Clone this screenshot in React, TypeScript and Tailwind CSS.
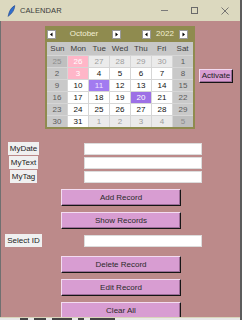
import React from "react";

type Kind = "wd" | "we" | "om" | "owe" | "pink" | "sel" | "today";

const cellCls: Record<Kind, string> = {
  wd: "bg-white text-[#111]",
  we: "bg-[#c9c9c9] text-[#5a5a5a]",
  om: "bg-[#ebebeb] text-[#9c9c9c]",
  owe: "bg-[#bfbfbf] text-[#8c8c8c]",
  pink: "bg-[#ffb6c8] text-white",
  sel: "bg-[#9d70e6] text-white",
  today: "bg-[#a27bf0] text-[#efe6ff]",
};

const rows: [string, Kind][][] = [
  [["25", "owe"], ["26", "pink"], ["27", "om"], ["28", "om"], ["29", "om"], ["30", "om"], ["1", "we"]],
  [["2", "we"], ["3", "pink"], ["4", "wd"], ["5", "wd"], ["6", "wd"], ["7", "wd"], ["8", "we"]],
  [["9", "we"], ["10", "wd"], ["11", "today"], ["12", "wd"], ["13", "wd"], ["14", "wd"], ["15", "we"]],
  [["16", "we"], ["17", "wd"], ["18", "wd"], ["19", "wd"], ["20", "sel"], ["21", "wd"], ["22", "we"]],
  [["23", "we"], ["24", "wd"], ["25", "wd"], ["26", "wd"], ["27", "wd"], ["28", "wd"], ["29", "we"]],
  [["30", "we"], ["31", "wd"], ["1", "om"], ["2", "om"], ["3", "om"], ["4", "om"], ["5", "owe"]],
];

const days = ["Sun", "Mon", "Tue", "Wed", "Thu", "Fri", "Sat"];

function ArrowBtn({ dir }: { dir: "l" | "r" }) {
  return (
    <div className="w-[9px] h-[9px] bg-white border border-[#9a9a9a] flex items-center justify-center">
      <svg width="5" height="5" viewBox="0 0 5 5">
        {dir === "l" ? (
          <polygon points="3.5,0.5 3.5,4.5 1,2.5" fill="#000" />
        ) : (
          <polygon points="1.5,0.5 1.5,4.5 4,2.5" fill="#000" />
        )}
      </svg>
    </div>
  );
}

function Calendar() {
  return (
    <div className="w-[150px] flex flex-col bg-[#8f8b4f] px-[2px] pb-[2px]">
      <div className="h-[16px] flex items-center text-[#f3efd2] text-[8px]">
        <ArrowBtn dir="l" />
        <div className="w-[56px] text-center leading-none">October</div>
        <ArrowBtn dir="r" />
        <div className="w-[21px]" />
        <ArrowBtn dir="l" />
        <div className="w-[28px] text-center leading-none">2022</div>
        <ArrowBtn dir="r" />
      </div>
      <div className="grid grid-cols-7 h-[13px] bg-[#c7c7c7] text-[#3c3c3c] text-[8px]">
        {days.map((d) => (
          <div key={d} className="flex items-center justify-center leading-none">
            {d}
          </div>
        ))}
      </div>
      <div className="grid grid-cols-7 gap-px pt-px bg-[#d6d6d6] text-[8px]">
        {rows.flat().map(([n, k], i) => (
          <div key={i} className={`h-[11px] flex items-center justify-center leading-none ${cellCls[k]}`}>
            {n}
          </div>
        ))}
      </div>
    </div>
  );
}

function Btn({ children, w }: { children: React.ReactNode; w: string }) {
  return (
    <div
      className={`${w} h-[17px] bg-[#d89dd2] border border-t-[#f3dcf1] border-l-[#f3dcf1] border-b-[#151515] border-r-[#151515] shadow-[inset_-1px_-1px_0_#9c6d98] flex items-center justify-center text-[8px] text-[#2a2a2a] leading-none`}
    >
      {children}
    </div>
  );
}

function Label({ children }: { children: React.ReactNode }) {
  return (
    <div className="w-[45px] flex justify-center">
      <div className="h-[13px] px-[2px] bg-[#f0f0f0] text-[#222] text-[8px] leading-none flex items-center">
        {children}
      </div>
    </div>
  );
}

function Entry() {
  return <div className="ml-[38px] w-[118px] h-[12px] bg-white border border-[#dcdcdc]" />;
}

export default function App() {
  return (
    <div className="w-[242px] h-[320px] overflow-hidden flex flex-col font-['Liberation_Sans',Arial,sans-serif] border-r-2 border-[#5c5c5c]">
      <div className="h-[21px] shrink-0 bg-[#dcd9bf] flex items-center relative">
        <svg className="ml-[7px]" width="9" height="12" viewBox="0 0 9 12">
          <path d="M7.8 0.6 C5 2 2.6 5 1.6 9.2 L1.2 11.4 L2.3 10.2 C5.2 8.6 7.4 5 7.8 0.6 Z" fill="#2f6fd0" stroke="#1b3f86" strokeWidth="0.6" />
        </svg>
        <span className="ml-[4px] text-[7.5px] text-[#3a3a3a] tracking-[0.1px]">CALENDAR</span>
        <div className="ml-auto flex items-center mr-[11px]">
          <div className="w-[7px] h-px bg-[#7a7a7a]" />
          <div className="ml-[23px] w-[7px] h-[7px] border border-[#6a6a6a]" />
          <svg className="ml-[23px]" width="8" height="8" viewBox="0 0 8 8">
            <path d="M0.5 0.5 L7.5 7.5 M7.5 0.5 L0.5 7.5" stroke="#6a6a6a" strokeWidth="0.9" />
          </svg>
        </div>
      </div>
      <div className="flex-1 min-h-0 overflow-hidden bg-[#bc8a8a] border-l border-[#707070] flex flex-col">
        <div className="mt-[5px] flex items-start pl-[44px]">
          <Calendar />
          <div className="ml-[4px] mt-[43px]">
            <div className="w-[34px] h-[14px] bg-[#d89dd2] border border-t-[#f3dcf1] border-l-[#f3dcf1] border-b-[#151515] border-r-[#151515] shadow-[inset_-1px_-1px_0_#9c6d98] flex items-center justify-center text-[8px] text-[#222] leading-none">
              Activate
            </div>
          </div>
        </div>
        <div className="mt-[13px] flex flex-col gap-px">
          <div className="flex items-center h-[13px]">
            <Label>MyDate</Label>
            <Entry />
          </div>
          <div className="flex items-center h-[13px]">
            <Label>MyText</Label>
            <Entry />
          </div>
          <div className="flex items-center h-[13px]">
            <Label>MyTag</Label>
            <Entry />
          </div>
        </div>
        <div className="mt-[6px] ml-[60px]">
          <Btn w="w-[120px]">Add Record</Btn>
        </div>
        <div className="mt-[6px] ml-[60px]">
          <Btn w="w-[120px]">Show Records</Btn>
        </div>
        <div className="mt-[5px] flex items-center h-[13px]">
          <Label>Select ID</Label>
          <Entry />
        </div>
        <div className="mt-[9px] ml-[60px]">
          <Btn w="w-[120px]">Delete Record</Btn>
        </div>
        <div className="mt-[6px] ml-[60px]">
          <Btn w="w-[120px]">Edit Record</Btn>
        </div>
        <div className="mt-[6px] ml-[60px]">
          <Btn w="w-[120px]">Clear All</Btn>
        </div>
      </div>
      <div className="h-px shrink-0 bg-[#d9d4bb]" />
      <div className="h-[2px] shrink-0 bg-[#e8e8e8] flex gap-[6px] pl-[20px]">
        <div className="w-[8px] h-[2px] bg-[#444]" />
        <div className="w-[12px] h-[2px] bg-[#444]" />
        <div className="w-[20px] h-[2px] bg-[#444]" />
        <div className="w-[6px] h-[2px] bg-[#444]" />
        <div className="w-[25px] h-[2px] bg-[#444]" />
      </div>
    </div>
  );
}
